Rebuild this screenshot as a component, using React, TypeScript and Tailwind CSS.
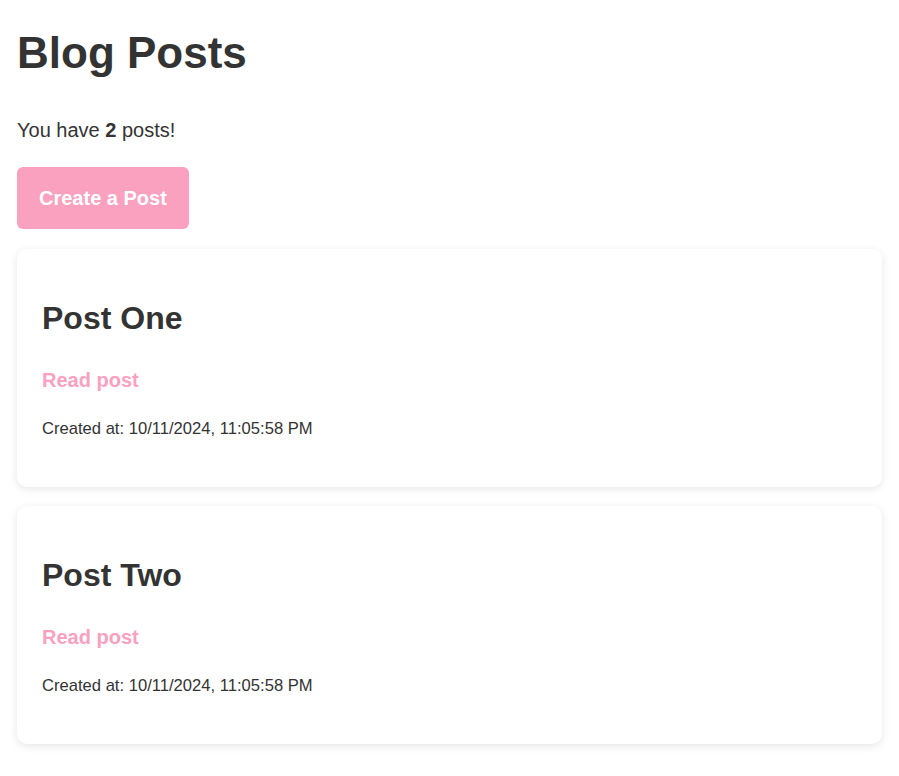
const posts = [
  { id: 1, title: 'Post One', createdAt: '10/11/2024, 11:05:58 PM' },
  { id: 2, title: 'Post Two', createdAt: '10/11/2024, 11:05:58 PM' },
];

export default function App() {
  return (
    <div className="min-h-screen bg-white px-[17px] pt-[28px] pb-8 text-[#333] font-['Liberation_Sans',Arial,sans-serif]">
      <h1 className="text-[44px] leading-[50px] font-bold">Blog Posts</h1>
      <p className="mt-[41px] text-[20px] leading-[23px]">
        You have <b>2</b> posts!
      </p>
      <button className="mt-[25px] h-[62px] px-[22px] rounded-[6px] bg-[#f9a1bf] text-white text-[20px] font-bold">
        Create a Post
      </button>
      <div className="mt-[20px] flex flex-col gap-[19px]">
        {posts.map(post => (
          <div
            key={post.id}
            className="bg-white rounded-[10px] px-[25px] pt-[51px] pb-[49px] shadow-[0_2px_8px_rgba(0,0,0,0.1)]"
          >
            <h2 className="text-[32px] leading-[37px] font-bold">{post.title}</h2>
            <a href="#" className="block mt-[32px] text-[20px] leading-[23px] font-bold text-[#f9a1bf]">
              Read post
            </a>
            <p className="mt-[28px] text-[16.6px] leading-[18px]">Created at: {post.createdAt}</p>
          </div>
        ))}
      </div>
    </div>
  );
}
